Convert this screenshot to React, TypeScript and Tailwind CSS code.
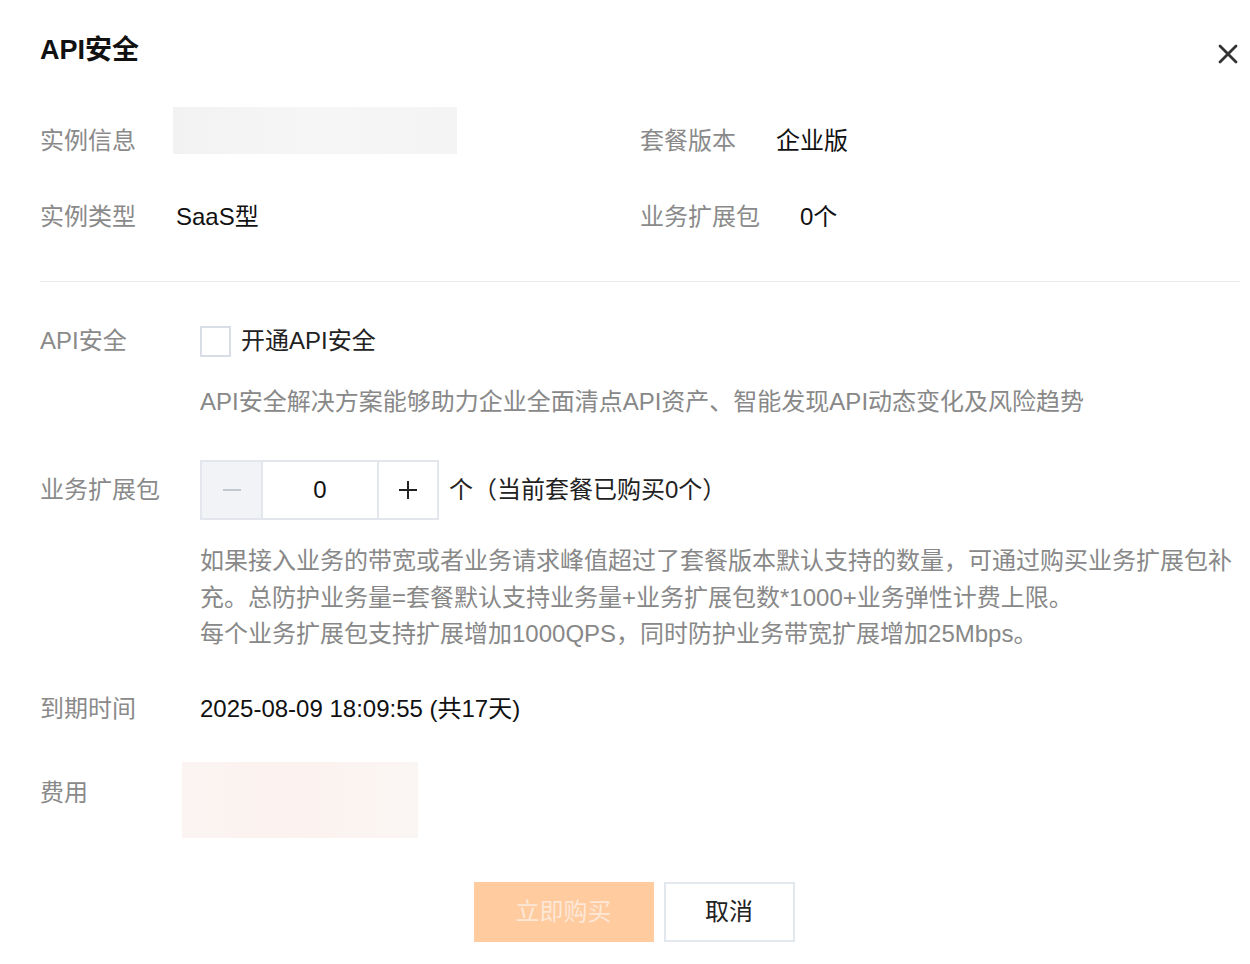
import { useState } from 'react';

const font = { fontFamily: '"Liberation Sans", "Noto Sans CJK SC", sans-serif' };

function CloseIcon() {
  return (
    <svg width="20" height="20" viewBox="0 0 20 20" className="text-[#333]">
      <path d="M2 2 L18 18 M18 2 L2 18" stroke="currentColor" strokeWidth="2.8" strokeLinecap="round" />
    </svg>
  );
}

export default function App() {
  const [checked, setChecked] = useState(false);
  const [count, setCount] = useState(0);

  return (
    <div className="min-h-[964px] w-[1250px] bg-white pl-[40px] pr-[10px] pt-[32px] text-[24px]" style={font}>
      {/* header */}
      <div className="flex items-start justify-between">
        <h1 className="text-[27px] font-bold leading-[36px] text-[#111]">API安全</h1>
        <button className="mr-[2px] mt-[12px]" aria-label="close">
          <CloseIcon />
        </button>
      </div>

      {/* instance summary */}
      <div className="mt-[39px] grid grid-cols-2">
        <div className="flex items-start">
          <span className="mt-[16px] w-[133px] leading-[36px] text-[#8a8a8a]">实例信息</span>
          <div className="h-[47px] w-[284px] bg-gradient-to-r from-[#f2f2f2] via-[#f6f6f6] to-[#f4f4f4]"></div>
        </div>
        <div className="flex items-start">
          <span className="mt-[16px] mr-[40px] leading-[36px] text-[#8a8a8a]">套餐版本</span>
          <span className="mt-[16px] leading-[36px] text-[#111]">企业版</span>
        </div>
      </div>
      <div className="mt-[40px] grid grid-cols-2 leading-[36px]">
        <div className="flex">
          <span className="mr-[40px] text-[#8a8a8a]">实例类型</span>
          <span className="text-[#111]">SaaS型</span>
        </div>
        <div className="flex">
          <span className="mr-[40px] text-[#8a8a8a]">业务扩展包</span>
          <span className="text-[#111]">0个</span>
        </div>
      </div>

      <div className="mt-[46px] h-px bg-[#e9ebef]"></div>

      {/* API security */}
      <div className="mt-[41px] flex items-center leading-[36px]">
        <span className="w-[160px] text-[#8a8a8a]">API安全</span>
        <label className="flex cursor-pointer items-center">
          <span
            onClick={() => setChecked(!checked)}
            className={`h-[31px] w-[31px] border-2 ${checked ? 'border-[#ff7a00] bg-[#ff7a00]' : 'border-[#d9dde5] bg-white'}`}
          ></span>
          <span className="ml-[10px] text-[#222]">开通API安全</span>
        </label>
      </div>
      <p className="mt-[25px] pl-[160px] leading-[36px] text-[#888]">
        API安全解决方案能够助力企业全面清点API资产、智能发现API动态变化及风险趋势
      </p>

      {/* extension packs */}
      <div className="mt-[40px] flex items-center">
        <span className="w-[160px] leading-[36px] text-[#8a8a8a]">业务扩展包</span>
        <div className="flex h-[60px] border-2 border-[#e3e6ec]">
          <button
            onClick={() => setCount(Math.max(0, count - 1))}
            className="flex w-[59px] items-center justify-center bg-[#f2f3f7]"
          >
            <span className="h-[2px] w-[18px] bg-[#c3c7cf]"></span>
          </button>
          <div className="flex w-[118px] items-center justify-center border-x-2 border-[#e3e6ec] text-[#111]">
            {count}
          </div>
          <button
            onClick={() => setCount(count + 1)}
            className="relative flex w-[58px] items-center justify-center"
          >
            <span className="absolute h-[2.5px] w-[18px] bg-[#222]"></span>
            <span className="absolute h-[18px] w-[2.5px] bg-[#222]"></span>
          </button>
        </div>
        <span className="ml-[10px] leading-[36px] text-[#222]">个（当前套餐已购买0个）</span>
      </div>
      <div className="mt-[23px] pl-[160px] leading-[36.5px] text-[#888]">
        <p>如果接入业务的带宽或者业务请求峰值超过了套餐版本默认支持的数量，可通过购买业务扩展包补充。总防护业务量=套餐默认支持业务量+业务扩展包数*1000+业务弹性计费上限。</p>
        <p>每个业务扩展包支持扩展增加1000QPS，同时防护业务带宽扩展增加25Mbps。</p>
      </div>

      {/* expiry */}
      <div className="mt-[38px] flex leading-[36px]">
        <span className="w-[160px] text-[#8a8a8a]">到期时间</span>
        <span className="text-[#111]">2025-08-09 18:09:55 (共17天)</span>
      </div>

      {/* fee */}
      <div className="mt-[35px] flex items-start">
        <span className="mt-[13px] w-[142px] leading-[36px] text-[#8a8a8a]">费用</span>
        <div className="h-[76px] w-[236px] bg-gradient-to-r from-[#fbf4f2] via-[#fcf2ef] to-[#faf6f4]"></div>
      </div>

      {/* actions */}
      <div className="mt-[44px] flex justify-center gap-[10px] pr-[12px]">
        <button className="h-[60px] w-[180px] bg-[#ffcb9f] text-[#fde7d6]">立即购买</button>
        <button className="h-[60px] w-[131px] border-2 border-[#e3e7ee] bg-white text-[#222]">取消</button>
      </div>
    </div>
  );
}
